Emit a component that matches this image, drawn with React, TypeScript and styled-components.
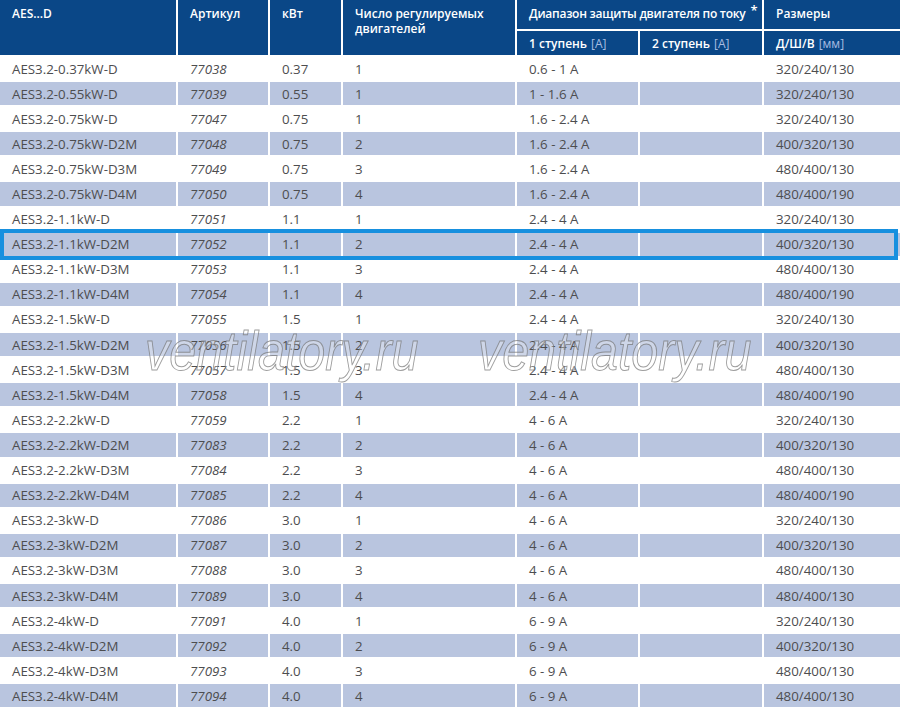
import styled, { createGlobalStyle, css } from 'styled-components'

const GlobalStyle = createGlobalStyle`
  html, body {
    margin: 0;
    padding: 0;
    background: #ffffff;
  }
  body {
    font-family: 'Open Sans', 'Noto Sans', sans-serif;
  }
`

const COLS = '176px 90px 71px 172px 121px 122px 136px'

const StyledPage = styled.div`
  position: relative;
  width: 900px;
  height: 710px;
  overflow: hidden;
  background: #ffffff;
  display: flex;
  flex-direction: column;
  gap: 2px;
`
const StyledHead = styled.div`
  display: grid;
  grid-template-columns: ${COLS};
  grid-template-rows: 29px 24px;
  gap: 2px;
`
const StyledHeadCell = styled.div<{ $col: string; $row: string; $center?: boolean; $tight?: boolean }>`
  grid-column: ${({ $col }) => $col};
  grid-row: ${({ $row }) => $row};
  background: #0a4787;
  color: #ffffff;
  font-size: 12px;
  font-weight: 600;
  line-height: 15px;
  letter-spacing: ${({ $tight }) => ($tight ? '-0.25px' : 'normal')};
  white-space: nowrap;
  padding: ${({ $center }) => ($center ? '0 0 0 12px' : '6px 0 0 12px')};
  display: flex;
  align-items: ${({ $center }) => ($center ? 'center' : 'flex-start')};
  box-sizing: border-box;
`
const StyledWrap = styled.span`
  white-space: normal;
  padding-right: 12px;
`
const StyledUnit = styled.span`
  font-weight: 400;
  color: #a8bde2;
  margin-left: 4px;
`
const StyledStar = styled.span`
  font-size: 13px;
  line-height: 15px;
  margin-left: 5px;
  position: relative;
  top: -3px;
`
const StyledBody = styled.div`
  display: flex;
  flex-direction: column;
  gap: 2px;
`
const StyledRow = styled.div<{ $shaded: boolean; $active: boolean }>`
  position: relative;
  display: grid;
  grid-template-columns: ${COLS};
  gap: 2px;
  height: 23.1px;
  --cell-bg: ${({ $shaded }) => ($shaded ? '#b9c5df' : '#ffffff')};
  ${({ $active }) =>
    $active &&
    css`
      z-index: 1;
      &::after {
        content: '';
        position: absolute;
        top: -4px;
        bottom: -4px;
        left: 0;
        right: 2px;
        border: 4px solid #1790df;
        pointer-events: none;
      }
    `}
`
const StyledCell = styled.div<{ $italic?: boolean }>`
  background: var(--cell-bg);
  color: #4d4d4f;
  font-size: 13.3px;
  font-style: ${({ $italic }) => ($italic ? 'italic' : 'normal')};
  padding: 0 12px;
  display: flex;
  align-items: center;
  white-space: nowrap;
`
const StyledWatermark = styled.div<{ $left: number }>`
  position: absolute;
  top: 324px;
  left: ${({ $left }) => $left}px;
  font-family: 'Liberation Sans', Arial, sans-serif;
  font-style: italic;
  font-size: 55px;
  line-height: 1;
  color: rgba(255, 255, 255, 0.3);
  -webkit-text-stroke: 1px rgba(115, 115, 115, 0.7);
  transform: scaleX(0.88);
  transform-origin: left top;
  pointer-events: none;
  white-space: nowrap;
  z-index: 2;
`

type Item = [string, string, string, string, string, string]

const ROWS: Item[] = [
  ['AES3.2-0.37kW-D', '77038', '0.37', '1', '0.6 - 1 A', '320/240/130'],
  ['AES3.2-0.55kW-D', '77039', '0.55', '1', '1 - 1.6 A', '320/240/130'],
  ['AES3.2-0.75kW-D', '77047', '0.75', '1', '1.6 - 2.4 A', '320/240/130'],
  ['AES3.2-0.75kW-D2M', '77048', '0.75', '2', '1.6 - 2.4 A', '400/320/130'],
  ['AES3.2-0.75kW-D3M', '77049', '0.75', '3', '1.6 - 2.4 A', '480/400/130'],
  ['AES3.2-0.75kW-D4M', '77050', '0.75', '4', '1.6 - 2.4 A', '480/400/190'],
  ['AES3.2-1.1kW-D', '77051', '1.1', '1', '2.4 - 4 A', '320/240/130'],
  ['AES3.2-1.1kW-D2M', '77052', '1.1', '2', '2.4 - 4 A', '400/320/130'],
  ['AES3.2-1.1kW-D3M', '77053', '1.1', '3', '2.4 - 4 A', '480/400/130'],
  ['AES3.2-1.1kW-D4M', '77054', '1.1', '4', '2.4 - 4 A', '480/400/190'],
  ['AES3.2-1.5kW-D', '77055', '1.5', '1', '2.4 - 4 A', '320/240/130'],
  ['AES3.2-1.5kW-D2M', '77056', '1.5', '2', '2.4 - 4 A', '400/320/130'],
  ['AES3.2-1.5kW-D3M', '77057', '1.5', '3', '2.4 - 4 A', '480/400/130'],
  ['AES3.2-1.5kW-D4M', '77058', '1.5', '4', '2.4 - 4 A', '480/400/190'],
  ['AES3.2-2.2kW-D', '77059', '2.2', '1', '4 - 6 A', '320/240/130'],
  ['AES3.2-2.2kW-D2M', '77083', '2.2', '2', '4 - 6 A', '400/320/130'],
  ['AES3.2-2.2kW-D3M', '77084', '2.2', '3', '4 - 6 A', '480/400/130'],
  ['AES3.2-2.2kW-D4M', '77085', '2.2', '4', '4 - 6 A', '480/400/190'],
  ['AES3.2-3kW-D', '77086', '3.0', '1', '4 - 6 A', '320/240/130'],
  ['AES3.2-3kW-D2M', '77087', '3.0', '2', '4 - 6 A', '400/320/130'],
  ['AES3.2-3kW-D3M', '77088', '3.0', '3', '4 - 6 A', '480/400/130'],
  ['AES3.2-3kW-D4M', '77089', '3.0', '4', '4 - 6 A', '480/400/130'],
  ['AES3.2-4kW-D', '77091', '4.0', '1', '6 - 9 A', '320/240/130'],
  ['AES3.2-4kW-D2M', '77092', '4.0', '2', '6 - 9 A', '400/320/130'],
  ['AES3.2-4kW-D3M', '77093', '4.0', '3', '6 - 9 A', '480/400/130'],
  ['AES3.2-4kW-D4M', '77094', '4.0', '4', '6 - 9 A', '480/400/130'],
]

const ACTIVE = '77052'

const App = () => {
  return (
    <>
      <GlobalStyle />
      <StyledPage>
        <StyledHead>
          <StyledHeadCell $col="1" $row="1 / 3">AES...D</StyledHeadCell>
          <StyledHeadCell $col="2" $row="1 / 3">Артикул</StyledHeadCell>
          <StyledHeadCell $col="3" $row="1 / 3">кВт</StyledHeadCell>
          <StyledHeadCell $col="4" $row="1 / 3">
            <StyledWrap>Число регулируемых двигателей</StyledWrap>
          </StyledHeadCell>
          <StyledHeadCell $col="5 / 7" $row="1" $tight>
            Диапазон защиты двигателя по току<StyledStar>*</StyledStar>
          </StyledHeadCell>
          <StyledHeadCell $col="7" $row="1">Размеры</StyledHeadCell>
          <StyledHeadCell $col="5" $row="2" $center>
            1 ступень<StyledUnit>[A]</StyledUnit>
          </StyledHeadCell>
          <StyledHeadCell $col="6" $row="2" $center>
            2 ступень<StyledUnit>[A]</StyledUnit>
          </StyledHeadCell>
          <StyledHeadCell $col="7" $row="2" $center>
            Д/Ш/В<StyledUnit>[мм]</StyledUnit>
          </StyledHeadCell>
        </StyledHead>
        <StyledBody>
          {ROWS.map(([model, code, kw, motors, range, size], i) => (
            <StyledRow key={code} $shaded={i % 2 === 1} $active={code === ACTIVE}>
              <StyledCell>{model}</StyledCell>
              <StyledCell $italic>{code}</StyledCell>
              <StyledCell>{kw}</StyledCell>
              <StyledCell>{motors}</StyledCell>
              <StyledCell>{range}</StyledCell>
              <StyledCell />
              <StyledCell>{size}</StyledCell>
            </StyledRow>
          ))}
        </StyledBody>
        <StyledWatermark $left={145}>ventilatory.ru</StyledWatermark>
        <StyledWatermark $left={478}>ventilatory.ru</StyledWatermark>
      </StyledPage>
    </>
  )
}

export default App
